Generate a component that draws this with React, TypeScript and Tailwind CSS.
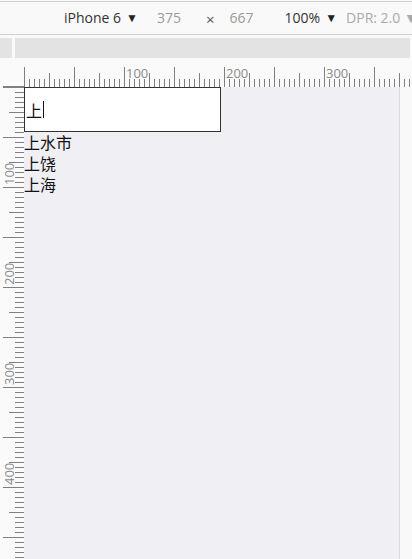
import React from 'react';

const TICKS_X = Array.from({ length: 78 }, (_, i) => i * 5);
const TICKS_Y = Array.from({ length: 95 }, (_, i) => i * 5);

function tickLen(v: number) {
  if (v % 50 === 0) return 20;
  if (v % 25 === 0) return 14;
  return 8;
}

function TopRuler() {
  return (
    <svg width={388} height={29} className="block">
      {TICKS_X.map((v) => (
        <line key={v} x1={v + 0.5} x2={v + 0.5} y1={29 - tickLen(v)} y2={29} stroke="#808080" strokeWidth={1} />
      ))}
      {[100, 200, 300].map((v) => (
        <text key={v} x={v + 2} y={20} fontSize={13} fill="#8a8a8a" fontFamily="'Open Sans', 'Liberation Sans', sans-serif">
          {v}
        </text>
      ))}
    </svg>
  );
}

function SideRuler() {
  return (
    <svg width={24} height={473} className="block">
      {TICKS_Y.map((v) => (
        <line key={v} x1={24 - tickLen(v) - 1} x2={24} y1={v + 0.5} y2={v + 0.5} stroke="#808080" strokeWidth={1} />
      ))}
      {[100, 200, 300, 400].map((v) => (
        <text
          key={v}
          transform={`translate(14, ${v - 2}) rotate(-90)`}
          fontSize={13}
          fill="#8a8a8a"
          fontFamily="'Open Sans', 'Liberation Sans', sans-serif"
        >
          {v}
        </text>
      ))}
    </svg>
  );
}

export default function App() {
  const cities = ['上水市', '上饶', '上海'];

  return (
    <div className="w-[412px] h-[559px] overflow-hidden bg-[#fafafa] pt-px flex flex-col font-['Open_Sans','Liberation_Sans',sans-serif]">
      {/* device toolbar */}
      <div className="h-[34px] shrink-0 border-t border-b border-[#cfcfcf] bg-[#f9f9f9] flex items-center text-[14px] leading-none whitespace-nowrap overflow-hidden">
        <span className="ml-[64px] text-[#333] flex items-center gap-[5px] shrink-0">
          iPhone 6<span className="text-[12px] text-[#222]">▼</span>
        </span>
        <span className="ml-[19px] text-[#999] shrink-0">375</span>
        <span className="ml-[25px] mt-[3px] text-[#555] text-[15px] shrink-0">×</span>
        <span className="ml-[15px] text-[#999] shrink-0">667</span>
        <span className="ml-[31px] text-[#333] flex items-center gap-[5px] shrink-0">
          100%<span className="text-[12px] text-[#222]">▼</span>
        </span>
        <span className="ml-[9px] text-[#aaa] shrink-0">DPR: 2.0 ▼</span>
      </div>

      {/* media query bar */}
      <div className="mt-[3px] h-[20px] shrink-0 flex gap-[3px]">
        <div className="w-[12px] bg-[#e3e3e3]" />
        <div className="flex-1 mr-[2px] bg-[#e3e3e3]" />
      </div>

      <div className="flex-1 grid grid-cols-[24px_1fr] grid-rows-[29px_1fr] min-h-0">
        <div className="relative">
          <div className="absolute left-[3px] right-0 bottom-0 h-px bg-[#808080]" />
        </div>
        <TopRuler />
        <div className="overflow-hidden">
          <SideRuler />
        </div>

        {/* emulated page */}
        <div className="flex min-h-0">
          <div className="w-[375px] bg-[#efeff4] font-['Noto_Sans_CJK_SC','Liberation_Sans',sans-serif] text-[#111]">
            <div className="w-[197px] h-[45px] border border-[#333] bg-white flex items-center pl-[1px] text-[16px] leading-[20px]">
              <span>上</span>
              <span className="ml-[1px] w-px h-[17px] bg-[#111]" />
            </div>
            <ul className="text-[16px] leading-[21px]">
              {cities.map((c) => (
                <li key={c} className="h-[21px]">
                  {c}
                </li>
              ))}
            </ul>
          </div>
          <div className="flex-1 border-l border-[#dcdcdc] bg-[#f9f9f9]" />
        </div>
      </div>
    </div>
  );
}
